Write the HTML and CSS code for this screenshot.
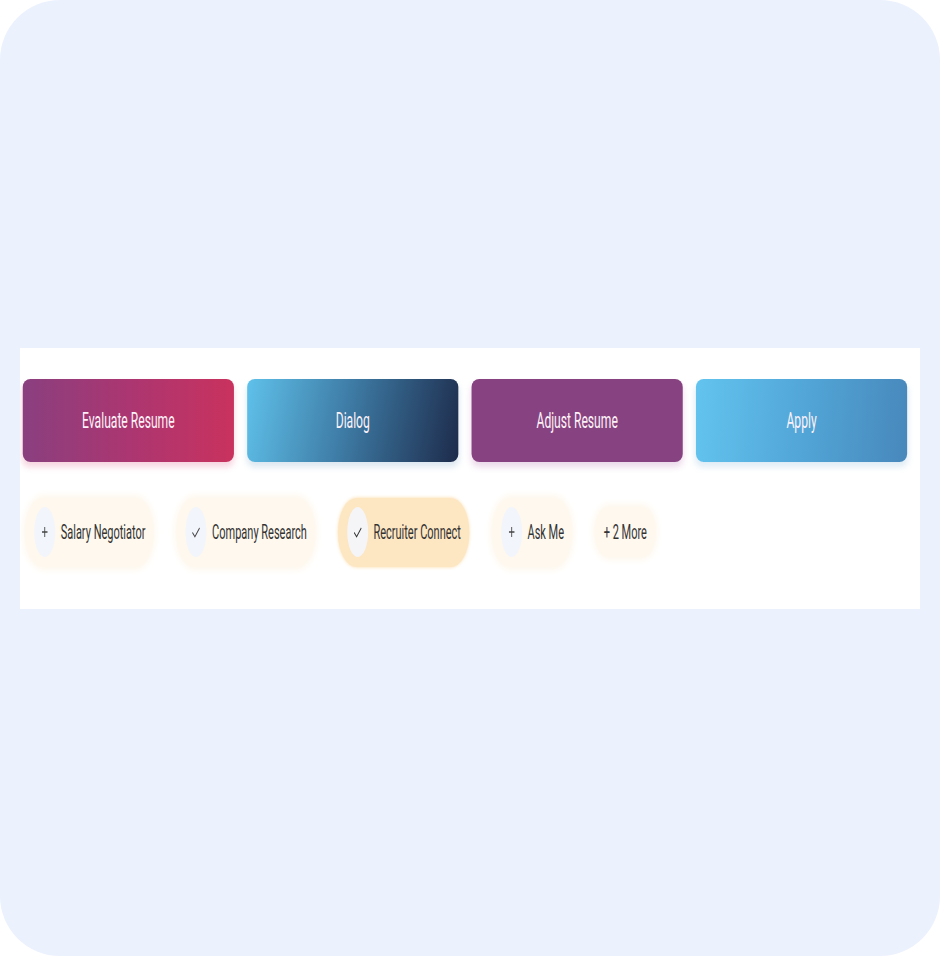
FILE: index.html
```html
<!DOCTYPE html>
<html lang="en">
<head>
<meta charset="utf-8">
<title>Actions</title>
<link rel="stylesheet" href="styles.css">
</head>
<body>
<div class="frame">
  <section class="panel">
    <div class="squeeze">
      <div class="actions">
        <button class="action action-evaluate">Evaluate Resume</button>
        <button class="action action-dialog">Dialog</button>
        <button class="action action-adjust">Adjust Resume</button>
        <button class="action action-apply">Apply</button>
      </div>
      <div class="chips">
        <div class="chip">
          <span class="chip-icon"><svg width="12" height="12" viewBox="0 0 12 12"><path d="M6 1v10M1 6h10" stroke="#444" stroke-width="1.6" fill="none"/></svg></span>
          <span class="chip-label">Salary Negotiator</span>
        </div>
        <div class="chip">
          <span class="chip-icon"><svg width="16" height="11" viewBox="0 0 16 11"><path d="M1.5 5.5l4.5 4.2L14.5 1" stroke="#444" stroke-width="1.5" fill="none"/></svg></span>
          <span class="chip-label">Company Research</span>
        </div>
        <div class="chip chip-selected">
          <span class="chip-icon"><svg width="16" height="11" viewBox="0 0 16 11"><path d="M1.5 5.5l4.5 4.2L14.5 1" stroke="#333" stroke-width="1.5" fill="none"/></svg></span>
          <span class="chip-label">Recruiter Connect</span>
        </div>
        <div class="chip">
          <span class="chip-icon"><svg width="12" height="12" viewBox="0 0 12 12"><path d="M6 1v10M1 6h10" stroke="#444" stroke-width="1.6" fill="none"/></svg></span>
          <span class="chip-label">Ask Me</span>
        </div>
        <div class="chip chip-more">
          <span class="chip-label">+ 2 More</span>
        </div>
      </div>
    </div>
  </section>
</div>
</body>
</html>
```

FILE: styles.css
```css
html, body {
  margin: 0;
  padding: 0;
  background: #ffffff;
}

body {
  font-family: Roboto, "Liberation Sans", Arial, sans-serif;
}

.frame {
  width: 940px;
  height: 956px;
  box-sizing: border-box;
  background: #ebf1fd;
  border-radius: 60px;
  display: flex;
  flex-direction: column;
  justify-content: center;
  padding: 0 20px;
}

.panel {
  background: #ffffff;
  width: 900px;
  overflow: hidden;
}

.squeeze {
  width: 1636px;
  transform: scaleX(0.55);
  transform-origin: left top;
  box-sizing: border-box;
  padding: 31px 0 42px 5px;
  display: flex;
  flex-direction: column;
  gap: 36px;
}

.actions {
  display: grid;
  grid-template-columns: repeat(4, 384px);
  gap: 24px;
}

.action {
  height: 83px;
  border: none;
  border-radius: 14px / 8px;
  color: #fdf2f8;
  font-family: Roboto, "Liberation Sans", Arial, sans-serif;
  font-size: 22px;
  font-weight: 400;
  cursor: pointer;
}

.action-evaluate {
  background: linear-gradient(90deg, #8a3f7f 0%, #ab3671 50%, #c9325e 100%);
  box-shadow: 0 5px 9px rgba(214, 60, 110, 0.22);
}

.action-dialog {
  background: linear-gradient(110deg, #5fc1ea 0%, #3f7ea8 45%, #1d2b4b 100%);
  box-shadow: 0 5px 9px rgba(60, 120, 170, 0.18);
}

.action-adjust {
  background: #874381;
  box-shadow: 0 5px 9px rgba(160, 70, 150, 0.2);
}

.action-apply {
  background: linear-gradient(100deg, #63c4ef 0%, #52a6d8 50%, #4888bb 100%);
  box-shadow: 0 5px 9px rgba(80, 150, 200, 0.18);
}

.chips {
  display: flex;
  align-items: center;
  gap: 41px;
  padding-left: 4px;
  height: 69px;
}

.chip {
  height: 69px;
  box-sizing: border-box;
  display: flex;
  align-items: center;
  gap: 10px;
  padding: 0 15px 0 17px;
  background: #fef8ee;
  border-radius: 34px;
  box-shadow: 0 0 8px 3px #fef7ec;
}

.chip-selected {
  background: #fde6c2;
  box-shadow: 0 0 4px 1px #fde9c9;
}

.chip-more {
  height: 50px;
  padding: 0 16px;
}

.chip-icon {
  width: 38px;
  height: 50px;
  border-radius: 50%;
  background: #f2f5fb;
  display: flex;
  align-items: center;
  justify-content: center;
}

.chip-selected .chip-icon {
  background: #f5f5f7;
}

.chip-label {
  font-size: 20px;
  color: #333333;
  white-space: nowrap;
}
```
